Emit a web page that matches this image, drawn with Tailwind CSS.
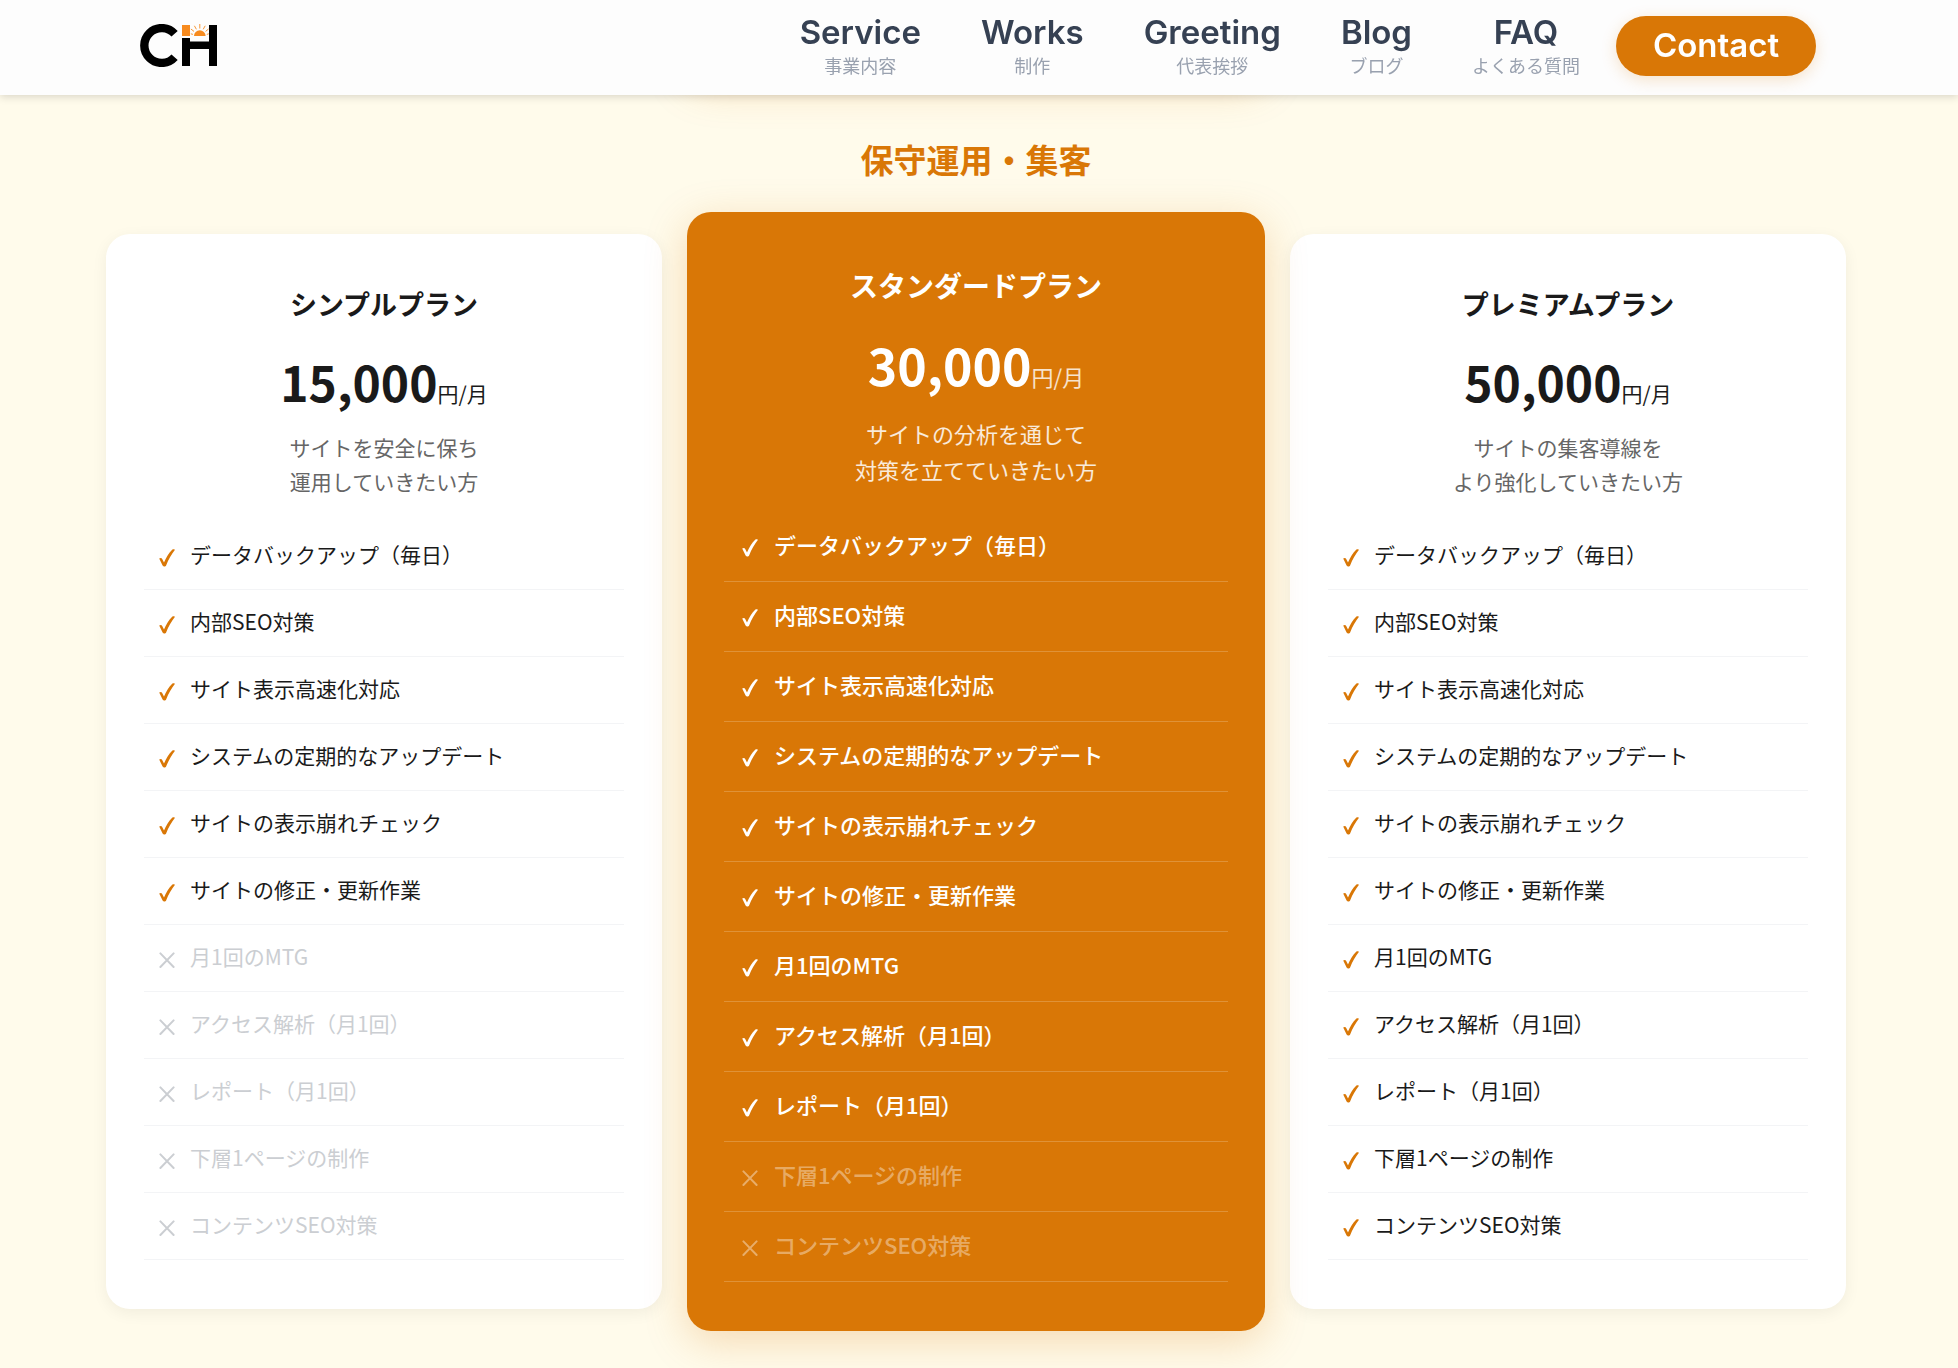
<!DOCTYPE html>
<html lang="ja">
<head>
    <meta charset="UTF-8">
    <meta name="viewport" content="width=device-width, initial-scale=1.0">
    <title>料金プラン | CH</title>
    <script src="https://cdn.jsdelivr.net/npm/@tailwindcss/browser@4"></script>
</head>
<body class="overflow-x-hidden bg-amber-50 font-['Noto_Sans_CJK_JP',sans-serif] text-[#1a1a1a]">
    <!-- Shared icons -->
    <svg class="hidden">
        <symbol id="icon-check" viewBox="0 0 16 18">
            <path fill="currentColor" d="M0.2 9.6 C1.3 8.7 2.6 8.7 3.2 9.9 L5 13.4 C7 8.8 9.8 4 13.4 0.5 C14.4 -0.1 15.7 0.1 16 0.8 C12.5 5.4 9.5 10.6 7.1 16.4 C6.6 17.8 4.3 17.9 3.6 16.6 Z"/>
        </symbol>
        <symbol id="icon-cross" viewBox="0 0 16 18">
            <path fill="none" stroke="currentColor" stroke-width="2" stroke-linecap="round" d="M1.4 2.4 L14.6 16 M14.6 2.4 L1.4 16"/>
        </symbol>
    </svg>

    <!-- Header -->
    <header class="fixed inset-x-0 top-0 z-20 h-[95px] bg-[#fdfdfd] pr-0.5 shadow-[0_2px_8px_rgba(0,0,0,0.15)]">
        <div class="mx-auto flex h-full max-w-[1676px] items-start justify-between">
            <a href="#" aria-label="CH" class="mt-6">
                <svg class="h-[43px] w-[78px]" viewBox="0 0 78 43">
                    <path fill="none" stroke="#000" stroke-width="8.4" d="M34.6 9.8 A17.4 17.4 0 1 0 34.6 33.2"/>
                    <rect x="42" y="1" width="8" height="11" fill="#f78b1f"/>
                    <path fill="#000" d="M42 14 h8 v3.5 h19 V1 h8 v41 h-8 V25 h-19 v17 h-8 Z"/>
                    <path fill="#f78b1f" d="M54 12 a5.8 5.8 0 0 1 11.6 0 Z"/>
                    <path stroke="#f78b1f" stroke-width="0.9" d="M59.8 4.5 V0 M56.4 5.3 L54.4 1.8 M63.2 5.3 L65.2 1.8 M54 7.4 L50.9 5 M65.6 7.4 L68.5 5 M52.9 10.4 L50.8 9.8 M66.8 10.4 L68.8 9.8"/>
                </svg>
            </a>
            <nav class="flex items-start gap-15 font-['Inter','Noto_Sans_CJK_JP',sans-serif]">
                <a href="#service" class="mt-3 flex flex-col items-center">
                    <span class="text-[33px] leading-10 font-semibold text-gray-700">Service</span>
                    <span class="text-[18px] leading-[30px] text-gray-400">事業内容</span>
                </a>
                <a href="#works" class="mt-3 flex flex-col items-center">
                    <span class="text-[33px] leading-10 font-semibold text-gray-700">Works</span>
                    <span class="text-[18px] leading-[30px] text-gray-400">制作</span>
                </a>
                <a href="#greeting" class="mt-3 flex flex-col items-center">
                    <span class="text-[33px] leading-10 font-semibold text-gray-700">Greeting</span>
                    <span class="text-[18px] leading-[30px] text-gray-400">代表挨拶</span>
                </a>
                <a href="#blog" class="mt-3 flex flex-col items-center">
                    <span class="text-[33px] leading-10 font-semibold text-gray-700">Blog</span>
                    <span class="text-[18px] leading-[30px] text-gray-400">ブログ</span>
                </a>
                <a href="#faq" class="mt-3 flex flex-col items-center">
                    <span class="text-[33px] leading-10 font-semibold text-gray-700">FAQ</span>
                    <span class="text-[18px] leading-[30px] text-gray-400">よくある質問</span>
                </a>
                <a href="#contact" class="mt-4 -ml-6 flex h-[60px] w-[200px] items-center justify-center rounded-full bg-[#d97706] text-[33px] font-semibold text-white shadow-[0_4px_16px_rgba(217,119,6,0.2)]">Contact</a>
            </nav>
        </div>
    </header>

    <main class="pr-1.5">
        <div class="mx-auto max-w-[1740px]">
            <!-- Bottom of the production plans, scrolled under the header -->
            <div class="mx-auto h-[76px] w-1/3 rounded-b-3xl bg-[#d97706] shadow-[0_10px_42px_rgba(217,119,6,0.25)]"></div>

            <section>
                <h2 class="mt-15 text-center text-[33px] leading-[46px] font-bold text-[#d97706]">保守運用・集客</h2>
                <div id="plans" class="mt-[30px] grid grid-cols-[556fr_578fr_556fr] items-center gap-x-[25px] pb-10"></div>
            </section>
        </div>
    </main>

    <script>
        const features = [
            'データバックアップ（毎日）',
            '内部SEO対策',
            'サイト表示高速化対応',
            'システムの定期的なアップデート',
            'サイトの表示崩れチェック',
            'サイトの修正・更新作業',
            '月1回のMTG',
            'アクセス解析（月1回）',
            'レポート（月1回）',
            '下層1ページの制作',
            'コンテンツSEO対策'
        ];

        // included: how many features, from the top, the plan covers
        const plans = [
            { name: 'シンプルプラン', price: '15,000', desc: 'サイトを安全に保ち<br>運用していきたい方', included: 6 },
            { name: 'スタンダードプラン', price: '30,000', desc: 'サイトの分析を通じて<br>対策を立てていきたい方', included: 9, featured: true },
            { name: 'プレミアムプラン', price: '50,000', desc: 'サイトの集客導線を<br>より強化していきたい方', included: 11 }
        ];

        const normal = {
            card: 'rounded-3xl bg-white px-[38px] pt-12 pb-[49px] shadow-[0_4px_16px_rgba(0,0,0,0.06)]',
            name: 'text-center text-[27px] leading-11 font-bold',
            price: 'mt-6 text-center text-[48px] leading-[62px] font-bold',
            unit: 'text-[21px] leading-none font-normal',
            desc: 'mt-[18px] text-center text-[21px] leading-[34px] text-[#666]',
            list: 'mt-[25px] text-[21px]',
            row: 'flex h-[67px] items-center gap-[15px] border-b border-[#f3f4f6] px-[15px] pb-0.5',
            on: 'text-[#d97706]',
            off: 'text-[#cbced2]'
        };
        const featured = {
            card: 'relative z-10 rounded-3xl bg-[#d97706] px-[37px] pt-[51px] pb-[49px] text-white shadow-[0_10px_42px_rgba(217,119,6,0.25)]',
            name: 'text-center text-[28px] leading-11 font-bold',
            price: 'mt-6 text-center text-[50px] leading-[66px] font-bold',
            unit: 'text-[22px] leading-none font-normal text-white/80',
            desc: 'mt-[18px] text-center text-[22px] leading-[36px] text-white/85',
            list: 'mt-[25px] text-[22px] font-medium',
            row: 'flex h-[70px] items-center gap-4 border-b border-white/20 px-[18px] pb-1',
            on: 'text-white',
            off: 'text-white/40'
        };

        document.getElementById('plans').innerHTML = plans.map(plan => {
            const c = plan.featured ? featured : normal;
            const rows = features.map((text, i) => {
                const has = i < plan.included;
                return `
                    <li class="${c.row}">
                        <svg class="mt-1.5 h-[18px] w-4 shrink-0 ${has ? c.on : c.off}"><use href="#${has ? 'icon-check' : 'icon-cross'}"/></svg>
                        <span class="${has ? '' : c.off}">${text}</span>
                    </li>`;
            }).join('');
            return `
                <article class="${c.card}">
                    <h3 class="${c.name}">${plan.name}</h3>
                    <p class="${c.price}">${plan.price}<span class="${c.unit}">円/月</span></p>
                    <p class="${c.desc}">${plan.desc}</p>
                    <ul class="${c.list}">${rows}</ul>
                </article>`;
        }).join('');
    </script>
</body>
</html>
